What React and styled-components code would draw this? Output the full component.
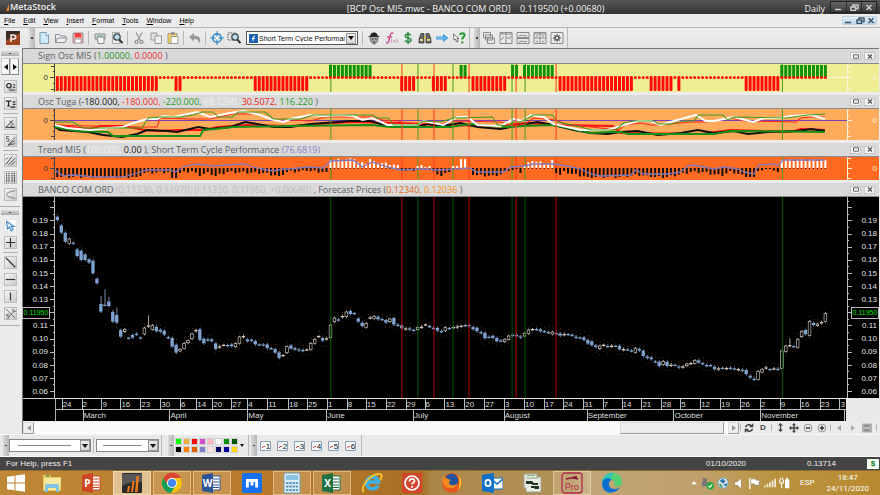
import React from 'react';
import styled, { createGlobalStyle } from 'styled-components';

const GlobalStyle = createGlobalStyle`
  * { box-sizing: border-box; }
  body { margin: 0; background: #e9e9e9; font-family: "Liberation Sans", Arial, sans-serif; font-size: 8px; }
  button, select { font: inherit; color: inherit; padding: 0; margin: 0; border: 0; background: none; border-radius: 0; }
  svg { display: block; }
  h1, p { margin: 0; font: inherit; }
`;

const Page = styled.div`
  min-height: 100vh;
  display: flex;
  flex-direction: column;
`;

const TitleBar = styled.header`
  height: 14px;
  display: flex;
  align-items: center;
  background: linear-gradient(#575757, #414141 60%, #303030);
  color: #f2f2f2;
  font: 9px/14px "Open Sans", "Noto Sans", sans-serif;
  padding: 0 3px 0 6px;
  white-space: pre;
`;
const Brand = styled.h1`
  display: flex;
  align-items: center;
  flex: 5 1 0;
  font-weight: 600;
`;
const DocTitle = styled.div`
  padding-top: 3px;
`;
const TitleRight = styled.div`
  flex: 4 1 0;
  display: flex;
  justify-content: flex-end;
  align-items: center;
  gap: 5px;
`;
const Period = styled.span`
  padding-top: 3px;
`;
const WinButtons = styled.div`
  display: flex;
  border: 1px solid ${(p) => (p.$dark ? '#222' : '#c3d3e0')};
  background: ${(p) => (p.$dark ? 'linear-gradient(#666, #3a3a3a)' : 'linear-gradient(#e6f0f8, #b9cfe0)')};
  color: ${(p) => (p.$dark ? '#ccc' : '#3d5a70')};
  button {
    width: ${(p) => (p.$dark ? 15 : 11)}px;
    height: ${(p) => (p.$dark ? 10 : 7)}px;
    display: flex;
    align-items: center;
    justify-content: center;
  }
  button + button { border-left: 1px solid ${(p) => (p.$dark ? '#2b2b2b' : '#d9e6ef')}; }
`;

const MenuBar = styled.nav`
  height: 14px;
  display: flex;
  align-items: center;
  justify-content: space-between;
  padding: 0 3px 0 4px;
  background: #ebebeb;
  border-bottom: 1px solid #b5b5b5;
`;
const Menus = styled.div`
  display: flex;
  gap: 8px;
  font-size: 7px;
  button::first-letter { text-decoration: underline; }
`;

const ToolBar = styled.div`
  height: 20px;
  display: flex;
  align-items: center;
  padding-left: 4px;
  background: linear-gradient(#eee, #e4e4e4);
`;
const Tool = styled.button`
  width: 17px;
  height: 17px;
  display: flex;
  align-items: center;
  justify-content: center;
`;
const Sep = styled.span`
  width: 1px;
  align-self: stretch;
  margin: ${(p) => (p.$full ? 0 : 3)}px ${(p) => (p.$tight ? 1 : 2)}px;
  background: #b8b8b8;
`;
const Grip = styled.span`
  width: 6px;
  align-self: stretch;
  margin-left: ${(p) => p.$left || 0}px;
  background: radial-gradient(circle at center, #444 0, #444 1px, transparent 1px), linear-gradient(90deg, #d9d9d9, #b5b5b5);
`;
const IndicatorBox = styled.div`
  display: flex;
  align-items: center;
  width: 112px;
  height: 14px;
  margin: 0 2px 0 4px;
  padding: 0 1px 0 2px;
  gap: 1px;
  border: 1px solid #555;
  background: #fff;
  svg { flex: none; }
`;
const IndicatorSelect = styled.select`
  flex: 1;
  min-width: 0;
  height: 11px;
  appearance: none;
  font-size: 7px;
  color: #111;
  overflow: hidden;
  outline: none;
`;
const ArrowBox = styled.span`
  width: 10px;
  height: 11px;
  flex: none;
  display: flex;
  align-items: center;
  justify-content: center;
  border: 1px solid #999;
  background: linear-gradient(#ececec, #d8d8d8);
`;

const Body = styled.main`
  flex: 1;
  display: flex;
  min-height: 0;
`;
const Rail = styled.aside`
  width: 22px;
  flex: none;
  display: flex;
  flex-direction: column;
  align-items: center;
  padding: 3px 2px 0 0;
  background: #ebebeb;
`;
const RailGrip = styled.div`
  width: 18px;
  height: 5px;
  margin-bottom: 2px;
  background: radial-gradient(circle at center, #444 0, #444 1px, transparent 1px), linear-gradient(#ddd, #aaa);
`;
const RailPager = styled.div`
  display: flex;
  margin-bottom: 3px;
  button {
    width: 9px;
    height: 17px;
    display: flex;
    align-items: center;
    justify-content: center;
    background: #f6f6f6;
    border: 1px solid #ccc;
    border-right-color: #888;
    border-bottom-color: #888;
  }
`;
const RailTool = styled.button`
  width: 13px;
  height: 13px;
  margin: 2px 0;
  display: flex;
  align-items: center;
  justify-content: center;
  background: ${(p) => (p.$on ? '#fafafa' : 'linear-gradient(135deg, #f6f6f6, #c9c9c9)')};
  border: 1px solid ${(p) => (p.$on ? '#e4e4e4' : '#bdbdbd')};
`;
const RailSep = styled.div`
  width: ${(p) => (p.$wide ? 20 : 15)}px;
  height: 1px;
  margin: ${(p) => (p.$wide ? 3 : 1)}px 0;
  background: #adadad;
`;

const Work = styled.section`
  flex: 1;
  min-width: 0;
  display: flex;
  flex-direction: column;
  border-left: 1px solid #777;
  margin-right: 1px;
`;
const Head = styled.div`
  height: 17px;
  flex: none;
  display: flex;
  align-items: center;
  justify-content: space-between;
  padding: 0 4px 0 15px;
  border-top: 3px solid #ececec;
  border-bottom: 1px solid #8a8a8a;
  background: #d9d9d9;
  &:first-child { height: 16px; border-top: 1px solid #777; }
`;
const Legend = styled.p`
  font: 9px/12px "Open Sans", "Noto Sans", sans-serif;
  color: #5c6266;
  white-space: pre;
`;
const Val = styled.span`
  color: ${(p) => p.$c};
`;
const HeadButtons = styled.div`
  display: flex;
  gap: 3px;
  button {
    width: 11px;
    height: 8px;
    display: flex;
    align-items: center;
    justify-content: center;
    background: #f4f4f4;
    border: 1px solid #c4c4c4;
  }
`;
const ChartRow = styled.div`
  display: flex;
  height: ${(p) => p.$h}px;
  flex: ${(p) => (p.$grow ? '1 0 auto' : 'none')};
  background: ${(p) => p.$bg};
`;
const AxisLabels = styled.div`
  width: 27px;
  flex: none;
  display: flex;
  flex-direction: column;
  justify-content: ${(p) => (p.$scale ? 'space-between' : 'center')};
  align-items: flex-end;
  padding: ${(p) => (p.$scale ? '19px' : '0')} 2px ${(p) => p.$low || 0}px 0;
  color: ${(p) => p.$c};
  line-height: 10px;
`;
const LastPrice = styled.span`
  width: 28px;
  height: 12px;
  margin: -1px -2px;
  border: 1px solid #b9b9b9;
  background: #000;
  color: #00e000;
  font-size: 7px;
  line-height: 10px;
  text-align: center;
`;
const Plot = styled.svg`
  flex: ${(p) => (p.$w ? 'none' : '1 1 0')};
  width: ${(p) => (p.$w ? p.$w + 'px' : 'auto')};
  min-width: 0;
  height: 100%;
`;

const DateAxis = styled.div`
  height: 23px;
  flex: none;
  display: flex;
  background: #e9e9e9;
`;
const DateGap = styled.div`
  width: 32px;
  background: #000;
  border-top: 1px solid #ccc;
`;
const DateRows = styled.div`
  flex: 1;
  min-width: 0;
  margin-right: 33px;
  background: #000;
  border-top: 1px solid #e4e4e4;
  border-left: 1px solid #aaa;
  color: #ddd;
`;
const DateRow = styled.div`
  display: flex;
  height: 11px;
  line-height: 11px;
  border-bottom: ${(p) => (p.$line ? '1px solid #bbb' : '0')};
  span {
    min-width: 0;
    overflow: hidden;
    border-left: 1px solid #bbb;
    white-space: nowrap;
  }
  span:first-child { border: 0; }
`;
const DateCell = styled.span`
  flex: ${(p) => p.$span} 1 0;
`;

const ScrollRow = styled.div`
  height: 13px;
  flex: none;
  display: flex;
  align-items: center;
  background: #ebebeb;
`;
const ScrollButton = styled.button`
  width: 11px;
  height: 12px;
  display: flex;
  align-items: center;
  justify-content: center;
  background: #eee;
  border: 1px solid #ddd;
  border-right-color: #999;
  border-bottom-color: #999;
`;
const Track = styled.div`
  flex: 1;
  height: 12px;
  display: flex;
  justify-content: flex-end;
  background: #fafafa;
`;
const Thumb = styled.div`
  width: 15%;
  margin-right: 4px;
  background: #ececec;
  border: 1px solid #ddd;
  border-right-color: #999;
  border-bottom-color: #999;
`;
const ZoomTool = styled.button`
  width: 14px;
  height: 12px;
  display: flex;
  align-items: center;
  justify-content: center;
  color: #444;
  font-weight: bold;
  &:disabled { color: #aaa; }
`;

const StyleBar = styled.div`
  height: 23px;
  flex: none;
  display: flex;
  align-items: center;
  background: #e9e9e9;
  border-top: 1px solid #f8f8f8;
  border-bottom: 1px solid #f8f8f8;
`;
const LinePicker = styled.div`
  display: flex;
  align-items: center;
  width: ${(p) => p.$w}px;
  height: 13px;
  background: #fff;
  border: 1px solid #888;
  select {
    flex: 1;
    min-width: 0;
    height: 11px;
    appearance: none;
    background: linear-gradient(#888, #888) center / 76% 1px no-repeat;
  }
`;
const Swatches = styled.div`
  display: grid;
  grid-template-columns: repeat(8, 7px);
  gap: 1px;
  margin-left: 1px;
`;
const Swatch = styled.button`
  height: 7px;
  border: 1px solid #d0d0d0;
  background: ${(p) => p.$c};
`;
const MoreColors = styled.button`
  width: 8px;
  height: 12px;
  display: flex;
  align-items: center;
  justify-content: center;
`;
const StatusBar = styled.footer`
  height: 13px;
  flex: none;
  display: flex;
  align-items: center;
  background: #444;
  color: #eee;
  padding: 0 1px 0 6px;
`;
const StatusText = styled.span`
  flex: 1;
`;
const StatusValue = styled.span`
  width: ${(p) => p.$w}px;
`;
const StatusFlag = styled.span`
  width: 12px;
  height: 10px;
  background: #f4fff4;
  color: #0b7a1b;
  font-weight: bold;
  line-height: 10px;
  text-align: center;
`;

const TaskBar = styled.div`
  height: 25px;
  flex: none;
  display: flex;
  align-items: center;
  border-top: 1px solid #8c6a30;
  background: linear-gradient(90deg, #bf8835 0%, #b87a2a 30%, #a96f25 48%, #ab8648 49%, #b3935b 65%, #bfa577 67%, #c0a06a 80%, #b9933f 88%, #b98a30 100%);
`;
const StartButton = styled.button`
  width: 32px;
  height: 24px;
  display: flex;
  align-items: center;
  justify-content: center;
`;
const Task = styled.button`
  width: 38px;
  height: 24px;
  margin: 0 1px;
  display: flex;
  align-items: center;
  justify-content: center;
  border: 1px solid ${(p) => (p.$open ? 'rgba(255, 240, 210, 0.45)' : 'transparent')};
  background: ${(p) => (p.$active ? 'rgba(255, 245, 225, 0.55)' : p.$open ? 'rgba(255, 240, 210, 0.2)' : 'transparent')};
`;
const Tray = styled.div`
  margin-left: auto;
  display: flex;
  align-items: center;
  gap: 3px;
  color: #fff;
  font: 8px/10px Roboto, "Liberation Sans", sans-serif;
`;
const Lang = styled.span`
  margin: 0 9px 0 6px;
`;
const Clock = styled.div`
  text-align: center;
  line-height: 11px;
  margin-right: 11px;
`;

/* ---- chart data ---- */

const STEP = 3.954;
const barX = (i) => 57.3 + i * STEP;
const BARS = Array.from({ length: 195 }, (_, i) => i);

const SIGNALS = [
  [330, 'g'], [401, 'r'], [417, 'g'], [433, 'r'], [452, 'g'], [468, 'r'],
  [511, 'g'], [515, 'r'], [524, 'g'], [555, 'r'], [781, 'g'],
];

const SELL = [[0, 25], [30, 31], [50, 63], [87, 90], [95, 98], [105, 113], [127, 145], [150, 155], [157, 157], [174, 182]];
const BUY = [[69, 79], [102, 103], [115, 116], [118, 125], [183, 194]];
const within = (ranges, i) => ranges.some(([a, b]) => i >= a && i <= b);

const OSC = [
  ['#ff1111', 2, '55,16 70,18 90,20 100,17 123,17 145,21 158,22 180,21 205,21 217,18 247,16 290,17 350,13 400,14 440,16 500,17 525,14 555,16 612,17 620,24 700,25 730,21 790,23 800,20 824,21'],
  ['#111', 2, '55,18 60,21 88,23 103,26 122,28 137,25 147,21 167,22 177,23 198,18 210,20 230,18 245,13 263,16 273,18 290,18 310,15 350,12 370,12 383,16 417,18 427,15 440,17 460,14 477,18 500,20 520,16 537,13 553,16 573,21 590,24 607,25 620,23 637,22 657,26 680,24 697,21 713,24 733,22 747,25 767,23 797,22 810,20 824,22'],
  ['#169016', 2, '55,18 77,22 108,23 113,27 200,27 203,21 215,20 233,18 290,17 372,16 390,18 450,18 470,15 493,17 507,18 523,17 553,16 563,18 590,24 610,23 620,23 627,25 713,25 730,22 824,23'],
  ['#ff2a1c', 1, '55,16 123,18 157,18 160,9 190,10 210,10 232,5 258,5 272,11 290,11 310,12 325,8 372,8 382,11 398,12 408,16 425,14 440,15 455,12 500,13 512,17 525,15 533,9 555,11 565,15 590,18 618,21 624,16 640,14 650,16 670,15 690,13 705,13 730,9 745,12 795,13 800,9 810,8 824,8'],
  ['#fff', 2, '55,16 67,19 90,21 110,19 123,18 133,14 147,10 157,10 163,7 173,8 197,3 210,8 230,4 243,2 260,6 270,10 283,13 290,10 310,6 323,7 340,6 353,7 362,11 372,9 387,16 417,16 423,12 433,14 443,16 457,8 467,8 477,16 500,17 513,10 522,12 530,6 543,8 553,15 580,21 607,21 623,16 637,12 650,12 660,16 673,12 695,6 705,12 713,12 733,8 752,13 763,9 780,9 790,7 810,6 824,10'],
  ['#3f9a1c', 1, '55,13 73,13 83,19 142,19 148,9 160,8 180,8 193,6 202,3 213,3 218,8 232,8 238,3 265,3 273,10 300,10 313,6 372,6 377,9 388,9 393,16 417,16 423,12 440,13 453,9 492,8 497,16 507,17 513,13 520,13 533,6 552,6 557,13 580,18 590,21 615,21 623,14 633,12 653,12 658,15 670,15 683,12 693,12 698,6 722,6 727,11 733,8 785,9 807,6 824,5'],
];

const CYCLE =
  '55,13 63,19 73,18 97,20 123,20 137,16 147,13 170,13 175,15 185,9 197,7 213,9 243,7 257,11 273,14 283,12 290,12 307,10 323,11 330,4 353,3 362,10 372,5 387,10 400,13 423,12 437,13 457,12 468,11 477,15 503,15 510,10 523,9 533,7 553,7 567,9 580,12 590,17 600,19 630,18 635,13 643,17 667,17 680,15 687,9 693,8 713,12 723,10 737,12 743,15 753,17 758,8 773,7 777,9 782,3 824,3';

// [bar index, bar height], linear between the knots
const TREND = [
  [0, -9], [20, -9], [22, -5], [28, -4], [29, -10], [30, -10], [31, -5], [34, -3], [36, -8], [38, -4], [40, -8], [43, -4],
  [52, -5], [56, -8], [58, -4], [63, -3], [68, -4], [69, 8], [75, 9], [76, 6], [78, 4], [79, 9], [80, 7], [82, 5], [86, 3],
  [87, -3], [90, -3], [91, 2], [94, 2], [95, -3], [97, -8], [99, -4], [100, 2], [101, 2], [102, 9], [103, 9], [104, -1],
  [105, -7], [111, -8], [114, -3], [116, -1], [117, -5], [118, 2], [120, 7], [124, 4], [125, 8], [126, -5], [127, -7],
  [128, -3], [130, -6], [134, -9], [144, -9], [146, -6], [150, -9], [154, -9], [160, -4], [163, -4], [168, -8], [170, -3],
  [174, -9], [176, -9], [177, -3], [180, -1], [182, -4], [183, 8], [194, 8],
];
const trendAt = (i) => {
  const k = TREND.findIndex(([at]) => at >= i);
  if (TREND[k][0] === i) return TREND[k][1];
  const [a, va] = TREND[k - 1];
  const [b, vb] = TREND[k];
  return va + ((vb - va) * (i - a)) / (b - a) + (i % 3) - 1;
};

// candle bodies as [open, close], three units to a pixel, measured from each block's base
const BLOCKS = [
  [9, [[50, 60], [76, 98], [98, 125], [130, 117], [128, 130], [148, 168], [152, 180], [163, 180], [178, 188], [182, 220], [236, 250], [312, 335], [314, 316], [304, 318], [336, 365], [345, 368], [390, 410], [395, 388], [413, 415], [405, 413], [401, 403], [412, 415], [402, 384], [380, 376], [388, 376], [380, 394], [389, 395], [392, 404], [411, 414], [414, 440], [434, 458], [453, 448], [445, 430], [428, 422], [416, 402], [394, 390], [388, 420], [416, 430], [418, 420], [418, 424], [430, 447], [442, 439], [436, 434], [435, 438], [433, 439], [440, 430], [430, 411], [412, 408], [418, 424], [419, 422], [423, 433], [433, 435], [433, 435], [433, 444], [444, 446], [447, 458], [457, 474], [467, 465], [458, 440], [436, 446]]],
  [279, [[174, 179], [178, 182], [180, 182], [180, 178], [178, 160], [160, 148], [140, 138], [144, 152], [147, 145], [143, 105], [95, 84], [88, 90], [82, 78], [80, 66], [63, 72], [69, 72], [85, 95], [98, 108], [112, 100], [84, 82], [85, 79], [80, 88], [87, 89], [90, 98], [95, 87], [84, 104], [104, 106], [106, 115], [118, 115], [115, 118], [119, 122], [119, 112], [112, 110], [105, 103], [108, 110], [113, 115], [114, 122], [123, 125], [122, 112], [114, 116], [113, 111], [112, 109], [110, 107], [105, 107], [105, 109], [111, 118], [113, 124], [126, 129], [128, 145], [140, 142], [137, 144], [144, 154], [151, 153], [155, 148], [148, 138], [134, 137], [135, 137], [139, 143], [138, 130], [130, 120], [119, 117], [117, 119], [118, 124], [123, 125], [126, 128], [132, 126], [129, 131], [130, 137], [134, 132], [132, 134], [134, 137], [140, 143], [142, 144], [142, 150], [150, 161]]],
  [249, [[184, 196], [196, 201], [206, 198], [197, 194], [198, 200], [199, 197], [197, 199], [197, 208], [209, 207], [208, 210], [211, 213], [217, 205], [207, 212], [212, 228], [229, 234], [232, 238], [244, 246], [245, 258], [254, 244], [245, 258], [256, 254], [254, 256], [259, 263], [261, 259], [257, 252], [251, 249], [250, 241], [241, 248], [249, 252], [255, 257], [255, 257], [260, 268], [268, 265], [263, 266], [266, 264], [263, 265], [265, 268], [269, 267], [269, 273], [270, 283], [287, 293], [296, 298], [298, 274], [276, 268], [264, 262], [267, 269], [267, 265], [266, 268], [265, 213], [214, 198], [199, 195], [198, 200], [202, 178], [170, 154], [150, 163], [166, 124], [129, 135], [137, 132], [130, 126], [124, 100]]],
];
const CANDLES = BLOCKS.flatMap(([base, rows]) => rows.map(([o, c]) => [o + base, c + base]));
const SPIKES = { 11: 24, 12: 46, 13: 14, 15: 22, 23: 30, 14: 6, 185: 20 };

const WEEKS = [
  ['', 6], ['24', 20], ['2', 20], ['9', 19], ['16', 20], ['23', 20], ['30', 20], ['6', 16], ['14', 16], ['20', 19], ['27', 16],
  ['4', 20], ['11', 21], ['18', 19], ['25', 20], ['1', 20], ['8', 19], ['15', 20], ['22', 20], ['29', 19], ['6', 20], ['13', 20],
  ['20', 20], ['27', 20], ['3', 20], ['10', 20], ['17', 19], ['24', 20], ['31', 20], ['7', 19], ['14', 20], ['21', 20], ['28', 19],
  ['5', 20], ['12', 20], ['19', 20], ['26', 20], ['2', 20], ['9', 20], ['16', 20], ['23', 20], ['3', 6],
];
const MONTHS = [
  ['', 27], ['March', 87], ['April', 78], ['May', 79], ['June', 87], ['July', 91], ['August', 83], ['September', 87], ['October', 87], ['November', 84], ['', 1],
];
const PRICES = ['0.19', '0.18', '0.17', '0.16', '0.15', '0.14', '0.13', '0.12', '0.11', '0.10', '0.09', '0.08', '0.07', '0.06'];
const COLORS = [
  ['Lime', '#0f0'], ['Sand', '#f0b040'], ['Red', '#f00'], ['Orchid', '#d050d0'], ['Pink', '#ffb6c1'], ['White', '#fff'], ['Green', '#0a8f0a'], ['Dark green', '#005500'],
  ['Black', '#000'], ['Orange', '#ff8000'], ['Burnt orange', '#e06000'], ['Lavender', '#8080c8'], ['Rose', '#ffe4e1'], ['Navy', '#000060'], ['Blue', '#000098'], ['Yellow', '#ffd800'],
];

/* ---- icons ---- */

const Glyph = ({ size = 14, w = 1, children }) => (
  <svg width={size} height={size} viewBox="0 0 14 14" fill="none" stroke="#777" strokeWidth={w} aria-hidden="true">
    {children}
  </svg>
);

const Lens = ({ x = 0 }) => (
  <>
    <circle cx={7 + x} cy="6" r="3.2" fill="#b8dcf4" stroke="#444" strokeWidth="1.3" />
    <path d={`M${9.4 + x} 8.6l3 3.6`} stroke="#333" strokeWidth="2" />
  </>
);

const FILE_TOOLS = [
  ['New', <><path d="M3 1.5h6l2.5 2.5v8.500H3z" fill="#cfeafa" stroke="#7d9db0" /><path d="M9 1.5v3h3" stroke="#7d9db0" fill="#fff" /></>],
  ['Open', <path d="M1.5 11.5v-8h4l1 1.5h5v2M1.5 11.5l2-4.5h9.500l-2 4.5z" fill="#eef0f2" stroke="#8a8f94" />],
  ['Save', <><path d="M2 2h10v10H2z" fill="#e9a0a0" stroke="#999" /><path d="M4 2h6v4H4z" fill="#f04040" stroke="none" /><path d="M4 8h6v4H4z" fill="#fff" stroke="#aaa" /></>],
];
const PRINT_TOOLS = [
  ['Print', <><path d="M2 3h10v5H2z" fill="#d8dcd8" stroke="#888" /><path d="M4 6h7v6.5H5z" fill="#f4f7f2" stroke="#889" /><path d="M4 5h6" stroke="#5a8" /></>],
  ['Preview', <><path d="M2.5 1.5h7v11h-7z" fill="#eee" stroke="#aaa" /><Lens /></>],
];
const EDIT_TOOLS = [
  ['Cut', <><path d="M4 1.5l4.5 8M10 1.5l-4.5 8" stroke="#999" strokeWidth="1.3" /><circle cx="4.5" cy="11" r="1.6" /><circle cx="9.5" cy="11" r="1.6" /></>],
  ['Copy', <><path d="M2 2h6v7H2z" fill="#e2e2e2" stroke="#999" /><path d="M6 5h6.5v7.5H6z" fill="#eee" stroke="#999" /></>],
  ['Paste', <><path d="M2 2.5h9v10H2z" fill="#f2d35c" stroke="#a98" /><path d="M5 1h3.500v3H5z" fill="#999" stroke="none" /><path d="M5 5.5h7v7H5z" fill="#fff" stroke="#999" /></>],
];
const AIM_TOOLS = [
  ['Crosshair', <><circle cx="7" cy="7" r="4.3" stroke="#2c86c4" strokeWidth="1.5" /><path d="M7 0v14M0 7h14" stroke="#2c86c4" /><circle cx="7" cy="7" r="1.5" fill="#fff" stroke="none" /></>],
  ['Zoom box', <><path d="M1 2h8v7H1z" strokeDasharray="1.5 1" stroke="#555" /><Lens x={1} /></>],
];
const RUN_TOOLS = [
  ['Expert Advisor', <><path d="M3 5.500h8l-.5 5L7 13.500 3.500 10z" fill="#a9a39c" stroke="#555" strokeWidth=".8" /><path d="M3.500 5c0-4.500 7-4.500 7 0l2 .5H1.500z" fill="#222" stroke="#222" strokeWidth=".5" /><path d="M5 8h1.500M8 8h1.500M6 11h2" stroke="#222" /></>],
  ['Indicator Builder', <><path d="M9.5 2.5c-2-1.5-3 0-3.500 2.5l-1 4.5c-.5 2-1.500 3-3 2M3 6h5" stroke="#d05090" strokeWidth="1.5" /><path d="M8 12c-1-1.500-1-2.500 0-4M12.500 8c1 1.500 1 2.500 0 4M9.300 9l2 2.200M11.300 9l-2 2.200" stroke="#d080a8" strokeWidth=".8" /></>],
  ['System Tester', <path d="M10 4.300C8.500 2.300 4.300 2.700 4.300 5c0 2.500 5.700 1.500 5.700 4 0 2.500-4.500 2.500-6 .5M7 1v12" stroke="#2c8c3a" strokeWidth="1.5" />],
  ['Explorer', <><path d="M3 2.500h3V12H1V8zM8 2.500h3L13 8v4H8z" fill="#666" stroke="#333" strokeWidth=".7" /><path d="M6 5h2v3H6z" fill="#d8b850" stroke="none" /><path d="M2 9h3M9 9h3" stroke="#f0d468" strokeWidth="2" /></>],
  ['Run', <><path d="M1 5.500h7V3l5.500 4L8 11V8.500H1z" fill="#3a9adc" stroke="none" /><path d="M1 7h10" stroke="#9ad0f4" /></>],
  ['Context help', <><path d="M1.500 3l.5 6 1.500-1 1 3 1.500-.5-1-3H7z" fill="#fff" stroke="#555" strokeWidth=".8" /><path d="M8 4c.5-2.500 4.500-2.500 4.500 0 0 2-2.200 2-2.200 4.500M10.300 10.500v2" stroke="#1f9a30" strokeWidth="2" /></>],
];
const WINDOW_TOOLS = [
  ['Cascade', <path d="M1.500 1.500h7v5h-7zM3.500 4h7v5h-7zM5.500 7h7v5.500h-7z" fill="#e8e8e8" stroke="#8a8a8a" />],
  ['Tile columns', <path d="M1 1.500h12v11H1zM7 1.500v11M2 9l3-3M8 6l2 2 2-3M1 3h12" stroke="#8a8a8a" />],
  ['Tile rows', <path d="M1 1.500h12v5H1zM1 7.500h12v5H1zM3 5l3-1 3 1 2-1M3 11l3-1 3 1 2-1" stroke="#8a8a8a" />],
  ['Tile grid', <path d="M1 1.500h12v11H1zM7 1.500v11M1 7h12M1 3h12M3 5.500l2-1M9 5.500l2-1M3 11l2-1M9 11l2-1" stroke="#8a8a8a" />],
  ['Options', <><path d="M1 1.500h12v11H1z" stroke="#8a8a8a" /><circle cx="7" cy="7" r="2" stroke="#555" strokeWidth="1.5" /><path d="M7 3v2M7 9v2M3 7h2M9 7h2M4.300 4.300l1.200 1.200M8.500 8.500l1.200 1.200M9.700 4.300L8.500 5.500M5.500 8.500L4.300 9.700" stroke="#555" /></>],
];

const RAIL_TOP = [
  ['Quick list', <><circle cx="5" cy="6" r="2.800" stroke="#222" strokeWidth="1.5" /><path d="M6 7l2 2.500M10 5h3M10 8h3M5 11.500h8" stroke="#555" strokeWidth="1.5" /></>],
  ['Templates', <path d="M1 4h7M4.500 4v6M3 10h3M10 5h3M10 8h3M7 11.500h6" stroke="#222" strokeWidth="1.5" />],
  'sep',
  ['Gann angle', <path d="M1 12h12M1 12l9-9M7 9a4 4 0 0 1 2 3M6 4l5 5" stroke="#333" strokeWidth="1.2" />],
  ['Speed lines', <path d="M5 2H2v3h3v3H1.500M4 13l9-10M4 13l9-6M4 13l9-2" stroke="#444" />],
  'sep',
  ['Parallel lines', <path d="M1 12L9 2M4 13l9-9M8 13l5-5M1 6l3-3" stroke="#444" strokeWidth="1.2" />],
  ['Time zones', <path d="M2 1v12M5 1v12M9 1v12M12 1v12" stroke="#444" strokeWidth="1.5" strokeDasharray="2 .8" />],
  ['Arc', <path d="M13 2C-2 5-2 9 13 12" stroke="#777" strokeWidth="1.2" />],
];
const RAIL_DRAW = [
  ['Trendline', <path d="M1 1l12 12" stroke="#333" strokeWidth="1.5" />],
  ['Horizontal line', <path d="M1 7h12" stroke="#333" strokeWidth="1.5" />],
  ['Vertical line', <path d="M7 2v10" stroke="#333" strokeWidth="1.5" />],
  ['Support and resistance', <path d="M1 1l12 12M5 11L12 4M10 1v3h4M5 8H2v2h3v3H2" stroke="#555" />],
];

const Down = () => <svg width="6" height="4" viewBox="0 0 6 4" aria-hidden="true"><path d="M0 0h6L3 4z" fill="#111" /></svg>;
const Tri = ({ left, c = '#999' }) => (
  <svg width="4" height="6" viewBox="0 0 4 6" aria-hidden="true"><path d={left ? 'M4 0v6L0 3z' : 'M0 0v6l4-3z'} fill={c} /></svg>
);

const WindowControls = ({ dark }) => (
  <WinButtons $dark={dark}>
    {[['Minimize', 'M1 5.500h6'], ['Restore', 'M3 3V1h5v3.500H6M1 3h4.500v3.500H1z'], ['Close', 'M1.500 1l5 5M6.500 1l-5 5']].map(([name, d]) => (
      <button key={name} type="button" aria-label={name}>
        <svg width="9" height="7" viewBox="0 0 9 7" fill="none" stroke="currentColor" strokeWidth="1.5"><path d={d} /></svg>
      </button>
    ))}
  </WinButtons>
);

const Tools = ({ items }) =>
  items.map(([name, art]) => (
    <Tool key={name} type="button" aria-label={name}><Glyph>{art}</Glyph></Tool>
  ));
const RailTools = ({ items }) =>
  items.map((item, n) =>
    item === 'sep' ? <RailSep key={n} /> : (
      <RailTool key={item[0]} type="button" aria-label={item[0]}><Glyph size={11}>{item[1]}</Glyph></RailTool>
    ));

const PanelHead = ({ children }) => (
  <Head>
    <Legend>{children}</Legend>
    <HeadButtons>
      <button type="button" aria-label="Maximize panel"><svg width="6" height="5" viewBox="0 0 6 5"><path d="M.5.8h5v3.400h-5z" fill="none" stroke="#666" /></svg></button>
      <button type="button" aria-label="Close panel"><svg width="6" height="5" viewBox="0 0 6 5"><path d="M1 .5l4 4M5 .5l-4 4" stroke="#555" strokeWidth="1.2" /></svg></button>
    </HeadButtons>
  </Head>
);

const Signals = ({ h }) =>
  SIGNALS.map(([x, kind]) => (
    <rect key={x} x={x} y="0" width="1" height={h} fill={kind === 'g' ? '#4c9a24' : '#ff3a1c'} />
  ));

const Ruler = ({ h, marks, c, right }) => (
  <Plot $w={5} viewBox={`0 0 5 ${h}`} preserveAspectRatio="none" shapeRendering="crispEdges" aria-hidden="true">
    <rect x={right ? 0 : 4} width="1" height={h} fill={c} />
    {marks.map(([y, len]) => <rect key={y} x={right ? 0 : 5 - len} y={y} width={len} height="1" fill={c} />)}
  </Plot>
);

const SmallPanel = ({ h, bg, low, marks, children }) => (
  <ChartRow $h={h} $bg={bg}>
    <AxisLabels $c="#333" $low={low}>0</AxisLabels>
    <Ruler h={h} marks={marks} c="#444" />
    <Plot viewBox={`55 0 791 ${h}`} preserveAspectRatio="none">{children}</Plot>
    <Ruler h={h} marks={marks} c="#fff4d8" right />
    <AxisLabels $c="#fff4d8" $low={low}>0</AxisLabels>
  </ChartRow>
);

const PRICE_MARKS = Array.from({ length: 30 }, (_, n) => [Math.round(194 - n * 6.56), n % 2 ? 2 : 5]).filter(([y]) => y > 0);
const PriceLabels = () => (
  <AxisLabels $c="#e4e4e4" $scale $low={1}>
    {PRICES.map((p) => (p === '0.12' ? <LastPrice key={p}>0.11950</LastPrice> : <span key={p}>{p}</span>))}
  </AxisLabels>
);

const Candle = ({ i, open, close }) => {
  const x = 7 + i * STEP * 3;
  const top = Math.min(open, close);
  const size = Math.abs(close - open);
  const up = close < open;
  const tail = size > 3 ? 4 + ((i * 7) % 7) : 3 + (i % 3);
  const line = up ? '#cfc8bd' : '#86a6cc';
  return (
    <g>
      <rect x={x - 1} y={top - (SPIKES[i] || tail)} width="3" height={SPIKES[i] || tail} fill={line} opacity=".85" />
      <rect x={x - 1} y={top + size} width="3" height={tail} fill={line} opacity=".85" />
      {up && size > 4
        ? <rect x={x - 4} y={top} width="8" height={size} fill="#000" stroke={line} strokeWidth="2" />
        : <rect x={x - 5} y={top} width="10" height={Math.max(size, 4)} fill={up ? '#d8cbb8' : '#7fa3cf'} />}
      <rect x={x} y={top - tail - 6 - ((i * 5) % 9)} width="3" height="2" fill="#7c3c08" />
      <rect x={x - 2} y={top + size + tail + 5 + ((i * 11) % 10)} width="3" height="2" fill="#6e3408" />
    </g>
  );
};

const tile = (c, letter) => (
  <>
    <path d="M9 4h10v14H9z" fill="#fff" stroke={c} />
    <path d="M12 7h6M12 10h6M12 13h6M12 15.500h6" stroke={c} />
    <path d="M1 3l11-2v20L1 19z" fill={c} />
    <text x="6.5" y="15" fontSize="10" fontWeight="bold" fontFamily="Open Sans, sans-serif" fill="#fff" textAnchor="middle">{letter}</text>
  </>
);
const TASKS = [
  ['File Explorer', '', <><path d="M2 3h7l1 2h10v14H2z" fill="#e7c65c" /><path d="M3 6h17l-1 12H3z" fill="#f8e9a0" /><path d="M4 20v-6q0-2 2-2h10q2 0 2 2v6h-3v-4H7v4z" fill="#7fc2e2" /><path d="M5 4h3" stroke="#4a9a50" strokeWidth="1.5" /></>],
  ['PowerPoint', '', tile('#d04525', 'P')],
  ['MetaStock', 'active', <><rect x="1" y="1" width="20" height="20" rx="1" fill="#2b2b2b" /><path d="M1 2h20v8Q10 9 1 14z" fill="#777" opacity=".6" /><path d="M6 20l1-6h2l-1 6zM10 20l1.500-11h2L12 20zM14 20l1.500-16h2.500L16.500 20z" fill="#f07a18" /></>],
  ['Chrome', 'open', <><circle cx="11" cy="11" r="10" fill="#f4c20d" /><path d="M2.300 6A10 10 0 0 1 20 6H11a5 5 0 0 0-4.500 7z" fill="#db4437" /><path d="M2.300 6A10 10 0 0 0 10 21l4.500-7.500a5 5 0 0 1-8-1z" fill="#0f9d58" /><circle cx="11" cy="11" r="5" fill="#fff" /><circle cx="11" cy="11" r="4" fill="#4285f4" /></>],
  ['Word', 'open', tile('#2a5699', 'W')],
  ['Maxthon', '', <><rect x="1" y="1" width="20" height="20" rx="2" fill="#1670f0" /><path d="M5 15.500V7h12v8.500h-2.800V10h-1.800v3.500H9.600V10H7.800v5.500z" fill="#fff" /></>],
  ['Calculator', 'open', <><rect x="3" y="1" width="16" height="20" rx="1" fill="#dcebf4" stroke="#6f9fbe" /><rect x="5" y="3" width="12" height="5" fill="#8cc4e4" /><path d="M5 11h12M5 14.500h12M5 18h12" stroke="#5d98c0" strokeWidth="2" strokeDasharray="2.5 .8" /></>],
  ['Excel', 'open', tile('#1f7244', 'X')],
  ['Internet Explorer', '', <><path d="M17 13.500a6 6 0 1 1 .5-3.500H6" fill="none" stroke="#3bb2ea" strokeWidth="3.5" /><path d="M3 20C-2 16 9 2 18 2c4 0 3 4 1 6" fill="none" stroke="#f4c430" strokeWidth="1.8" /></>],
  ['Help', '', <><rect x="1" y="1" width="20" height="20" fill="#d3452b" /><circle cx="11" cy="11" r="7" fill="none" stroke="#fff" strokeWidth="1.7" /><path d="M8.500 9.500c0-3.500 5-3.300 5-.5 0 1.800-2.500 1.800-2.500 3.500M11 14v1.800" fill="none" stroke="#fff" strokeWidth="1.8" /></>],
  ['Firefox', '', <><circle cx="11" cy="11" r="10" fill="#e8571b" /><circle cx="10.5" cy="8.5" r="6.8" fill="#24549c" /><path d="M2 4c2 2 3 1 5 3l3 1c-2 1-3 4 0 5 3 1 5-1 6-1-1 4-7 6-11 3C1 12 1 8 2 4z" fill="#f08a20" /><path d="M17 3c5 5 4 12 0 15 2-5 2-10 0-15z" fill="#ffcb2e" /></>],
  ['Outlook', '', <><path d="M9 6h13v11H9z" fill="#fff" stroke="#0a6cc0" /><path d="M10 7l6 5 6-5" fill="none" stroke="#0a6cc0" strokeWidth="1.5" /><path d="M1 3l12-2v20L1 19z" fill="#0f72c8" /><ellipse cx="7" cy="11" rx="2.6" ry="3.2" fill="none" stroke="#fff" strokeWidth="1.8" /></>],
  ['Trading desk', '', <><path d="M3 2h13v3h4v15H5v-4H3z" fill="#e9ede4" stroke="#9aa292" /><path d="M5 6h12M6 3.500h8" stroke="#8aa080" /><path d="M5 9h6l2 2h4v2h-5l-2-1H5zM10 14h8v3h-4l-1-1h-3z" fill="#1e3526" /></>],
  ['Pro', 'open', <><rect x="1" y="1" width="20" height="20" rx="3" fill="none" stroke="#b02a50" strokeWidth="1.3" /><path d="M5 7q6-2 12 0M12 5h4" stroke="#8a1838" strokeWidth="1.5" fill="none" /><text x="11" y="18" fontSize="9" fontFamily="Roboto, sans-serif" fill="#b02a50" textAnchor="middle">Pro</text></>],
  ['Edge', '', <><path d="M1 11A10 10 0 0 1 21 10c0 5-6 5-8 3 2-3 0-5-3-5-4 0-8 2-8 6z" fill="#36c5b0" /><path d="M12 1c6 0 9 4 9 9 0 5-6 5-8 3 2-3 0-5-3-5" fill="#5fd35a" opacity=".75" /><path d="M1 11c1-5 6-6 10-3-5 1-4 10 3 9 2 0 4-1 5-2-3 7-18 9-18-4z" fill="#0c6fd0" /></>],
];

export default function App() {
  return (
    <Page>
      <GlobalStyle />
      <TitleBar>
        <Brand>
          <svg width="4" height="8" viewBox="0 0 4 8" aria-hidden="true"><path d="M0 8L3 1v7z" fill="#f08020" /></svg>MetaStock
        </Brand>
        <DocTitle>{'[BCP Osc MI5.mwc - BANCO COM ORD]    0.119500 (+0.00680)'}</DocTitle>
        <TitleRight><Period>Daily</Period><WindowControls dark /></TitleRight>
      </TitleBar>
      <MenuBar>
        <Menus>
          {['File', 'Edit', 'View', 'Insert', 'Format', 'Tools', 'Window', 'Help'].map((m) => <button key={m} type="button">{m}</button>)}
        </Menus>
        <WindowControls />
      </MenuBar>
      <ToolBar>
        <Tool type="button" aria-label="Power Console">
          <Glyph><path d="M0 0h14v14H0z" fill="#3b2a24" stroke="none" /><path d="M0 9l14-7v12H0z" fill="#9a4420" stroke="none" /><path d="M5 11V4h2.500c3 0 3 4 0 4H5" stroke="#eee" strokeWidth="1.5" /></Glyph>
        </Tool>
        <Grip $left={8} />
        <Tools items={FILE_TOOLS} />
        <Sep />
        <Tools items={PRINT_TOOLS} />
        <Sep />
        <Tools items={EDIT_TOOLS} />
        <Sep />
        <Tool type="button" aria-label="Undo"><Glyph><path d="M1 6l5-4v2.500c6 0 8 4 5 8 0-3-1-4.500-5-4.500v2.500z" fill="#999" stroke="none" /></Glyph></Tool>
        <Sep />
        <Tools items={AIM_TOOLS} />
        <IndicatorBox>
          <svg width="9" height="9" viewBox="0 0 9 9" aria-hidden="true"><path d="M0 0h9v9H0z" fill="#1c5fae" /><path d="M6 2Q4 2 4 4v3M3 4.500h3" stroke="#fff" fill="none" /></svg>
          <IndicatorSelect aria-label="Indicator"><option>Short Term Cycle Performance</option></IndicatorSelect>
          <ArrowBox><Down /></ArrowBox>
        </IndicatorBox>
        <Sep />
        <Tools items={RUN_TOOLS} />
        <Sep $full />
        <Grip $left={2} />
        <Tools items={WINDOW_TOOLS} />
        <Sep $full />
      </ToolBar>

      <Body>
        <Rail>
          <RailGrip />
          <RailPager>
            <button type="button" aria-label="Previous tools"><Tri left c="#111" /></button>
            <button type="button" aria-label="Next tools"><Tri c="#111" /></button>
          </RailPager>
          <RailTools items={RAIL_TOP} />
          <RailSep $wide />
          <RailGrip />
          <RailTool $on type="button" aria-label="Pointer">
            <Glyph size={12}><path d="M2 1l1 10 2.500-2.500L8 13l2.500-1.500L8 7.500h3.500z" fill="#d8ecfa" stroke="#3f83c0" strokeWidth="1.3" /></Glyph>
          </RailTool>
          <RailTool type="button" aria-label="Crosshair"><Glyph size={11}><path d="M7 1v12M1 7h12" stroke="#333" strokeWidth="1.5" /></Glyph></RailTool>
          <RailSep />
          <RailTools items={RAIL_DRAW} />
          <RailSep $wide />
        </Rail>

        <Work>
          <PanelHead>
            Sign Osc MI5 (<Val $c="#1f9a28">1.00000, </Val><Val $c="#f03030">0.0000 </Val>)
          </PanelHead>
          <SmallPanel h={28} bg="#f0ee94" marks={[[2, 4], [7, 2], [13, 5], [19, 2], [25, 4]]}>
            <rect x="824" y="13" width="22" height="1" fill="#fdfbe0" />
            <Signals h={28} />
            {BARS.map((i) => (
              <g key={i}>
                {within(BUY, i) && <rect x={barX(i) - 1.5} y="1" width="3" height="13" fill="#0c930c" />}
                {within(SELL, i) ? <rect x={barX(i) - 1.5} y="12" width="3" height="15" rx="1" fill="#ff0a0a" /> : <circle cx={barX(i)} cy="13.5" r="1.5" fill="#ff0a0a" />}
              </g>
            ))}
          </SmallPanel>

          <PanelHead>
            Osc Tuga (<Val $c="#222">-180.000, </Val><Val $c="#f03030">-180.000, </Val><Val $c="#1f9a28">-220.000, </Val>
            <Val $c="#f2f2f2">69.1290, </Val><Val $c="#f02020">30.5072, </Val><Val $c="#1f9a28">116.220 </Val>)
          </PanelHead>
          <SmallPanel h={31} bg="#ffab5c" low={7} marks={[[1, 2], [6, 2], [11, 5], [17, 2], [22, 2], [27, 4]]}>
            <rect x="55" y="11" width="791" height="1" fill="#7a3fb0" />
            {OSC.map(([c, w, points]) => <polyline key={c} points={points} fill="none" stroke={c} strokeWidth={w} />)}
            <Signals h={31} />
          </SmallPanel>

          <PanelHead>
            Trend MI5 (<Val $c="#f2f2f2">100.000, </Val><Val $c="#222">0.00 </Val>), Short Term Cycle Performance <Val $c="#8c84c8">(76.6819)</Val>
          </PanelHead>
          <SmallPanel h={23} bg="#ff6a20" marks={[[1, 4], [6, 2], [11, 5], [16, 2], [21, 4]]}>
            <Signals h={23} />
            {BARS.map((i) => {
              const v = trendAt(i);
              return (
                <g key={i}>
                  <rect x={barX(i) - 1} y={v > 0 ? 11 - v : 11} width="2" height={Math.max(Math.abs(v), 1)} fill={v > 0 ? '#fff' : '#111'} />
                  {v > 0 && <rect x={barX(i) - 0.5} y="11" width="1" height="1" fill="#111" />}
                </g>
              );
            })}
            <polyline points={CYCLE} fill="none" stroke="#8478b8" strokeWidth="1.3" />
          </SmallPanel>

          <PanelHead>
            BANCO COM ORD <Val $c="#bcbcbc">(0.11330, 0.11970, 0.11330, 0.11950, +0.00680) </Val>, Forecast Prices (<Val $c="#e06c18">0.12340, </Val><Val $c="#f89018">0.12036 </Val>)
          </PanelHead>
          <ChartRow $h={201} $grow $bg="#000">
            <PriceLabels />
            <Ruler h={201} marks={PRICE_MARKS} c="#bbb" />
            <Plot viewBox="0 0 2373 603" preserveAspectRatio="none">
              {CANDLES.map(([open, close], i) => <Candle key={i} i={i} open={open} close={close} />)}
              {SIGNALS.map(([x, kind]) => (
                <rect key={x} x={(x - 55) * 3} width="3" height="603" fill={kind === 'g' ? '#006400' : '#c80000'} opacity=".9" />
              ))}
            </Plot>
            <Ruler h={201} marks={PRICE_MARKS} c="#bbb" right />
            <PriceLabels />
          </ChartRow>
          <DateAxis>
            <DateGap />
            <DateRows>
              <DateRow $line>{WEEKS.map(([t, n], k) => <DateCell key={k} $span={n}>{t}</DateCell>)}</DateRow>
              <DateRow>{MONTHS.map(([t, n], k) => <DateCell key={k} $span={n}>{t}</DateCell>)}</DateRow>
            </DateRows>
          </DateAxis>
          <ScrollRow>
            <ScrollButton type="button" aria-label="Scroll left"><Tri left /></ScrollButton>
            <Track><Thumb /></Track>
            <ScrollButton type="button" aria-label="Scroll right"><Tri /></ScrollButton>
            <Sep $tight />
            <ZoomTool type="button" aria-label="Refresh"><Glyph size={10} w={2}><path d="M2 6c1-4 7-5 9-1M12 8c-1 4-7 5-9 1M12 1v4H8M2 13V9h4" stroke="#444" /></Glyph></ZoomTool>
            <ZoomTool type="button">D</ZoomTool>
            <Sep $tight />
            <ZoomTool type="button" aria-label="Scale height"><Glyph size={9}><path d="M7 0l4 4H8v6h3l-4 4-4-4h3V4H3z" fill="#444" stroke="none" /></Glyph></ZoomTool>
            <ZoomTool type="button" aria-label="Pan"><Glyph size={10}><path d="M7 0l3 3H8v3h3V4l3 3-3 3V8H8v3h2l-3 3-3-3h2V8H3v2L0 7l3-3v2h3V3H4z" fill="#444" stroke="none" /></Glyph></ZoomTool>
            <ZoomTool type="button" aria-label="Zoom out"><Glyph size={10}><circle cx="7" cy="7" r="5.5" stroke="#777" /><path d="M4 7h6" stroke="#333" strokeWidth="2" /></Glyph></ZoomTool>
            <ZoomTool type="button" aria-label="Zoom in"><Glyph size={10}><circle cx="7" cy="7" r="5.5" stroke="#777" /><path d="M4 7h6M7 4v6" stroke="#333" strokeWidth="2" /></Glyph></ZoomTool>
            <Sep $tight />
            <ZoomTool type="button" disabled aria-label="Back"><Tri left c="#aaa" /></ZoomTool>
            <ZoomTool type="button" disabled aria-label="Forward"><Tri c="#aaa" /></ZoomTool>
            <ZoomTool type="button" aria-label="Data window"><Glyph size={10}><path d="M1 1.500h12v11H1z" fill="#bbb" stroke="#888" /><path d="M3 4h8M3 10h8" stroke="#777" strokeWidth="1.5" /></Glyph></ZoomTool>
            <Sep />
          </ScrollRow>
        </Work>
      </Body>

      <StyleBar>
        <Grip $left={3} />
        <LinePicker $w={82}><select aria-label="Line style"><option aria-label="Solid" /></select><ArrowBox><Down /></ArrowBox></LinePicker>
        <Sep />
        <LinePicker $w={63}><select aria-label="Line weight"><option aria-label="Thin" /></select><ArrowBox><Down /></ArrowBox></LinePicker>
        <Sep $full />
        <Grip $left={4} />
        <Swatches>{COLORS.map(([name, c]) => <Swatch key={name} type="button" $c={c} aria-label={name} />)}</Swatches>
        <MoreColors type="button" aria-label="More colors"><svg width="4" height="3" viewBox="0 0 4 3"><path d="M0 0h4L2 3z" fill="#111" /></svg></MoreColors>
        <Sep $full />
        <Grip />
        {[1, 2, 3, 4, 5, 6].map((n) => (
          <Tool key={n} type="button" aria-label={`Layout ${n}`}>
            <svg width="12" height="10" viewBox="0 0 12 10">
              <path d="M.5.5h10v9H.5z" fill="#f6f9fb" stroke="#8aa0b0" />
              <path d="M2 7l2-2 1 1" fill="none" stroke="#d04040" />
              <text x="8" y="8" fontSize="8" textAnchor="middle" fill="#111">{n}</text>
            </svg>
          </Tool>
        ))}
        <Sep $full />
      </StyleBar>
      <StatusBar>
        <StatusText>For Help, press F1</StatusText>
        <StatusValue $w={101}>01/10/2020</StatusValue>
        <StatusValue $w={60}>0.13714</StatusValue>
        <StatusFlag>$</StatusFlag>
      </StatusBar>
      <TaskBar>
        <StartButton type="button" aria-label="Start">
          <svg width="18" height="18" viewBox="0 0 18 18"><path d="M0 2.800l7.500-1v6.700H0zM8.500 1.600L18 .3v8.200H8.500zM0 9.500h7.500v6.700l-7.500-1zM8.500 9.500H18v8.200l-9.500-1.300z" fill="#fff" /></svg>
        </StartButton>
        {TASKS.map(([name, state, art]) => (
          <Task key={name} type="button" aria-label={name} $open={state !== ''} $active={state === 'active'}>
            <svg width="22" height="22" viewBox="0 0 22 22">{art}</svg>
          </Task>
        ))}
        <Tray>
          <Glyph size={8}><path d="M2 9l5-5 5 5z" fill="#fff" stroke="none" /></Glyph>
          <Glyph size={13}><path d="M2 1h4v4h1v5H1V5h1z" fill="#777" stroke="none" /><circle cx="10" cy="9.5" r="4" fill="#23a83a" stroke="none" /><path d="M8 9.500l1.500 1.700L12 8" stroke="#fff" strokeWidth="1.3" /></Glyph>
          <Glyph size={12}><circle cx="7" cy="7" r="6" fill="#dfeaf0" stroke="#6c9fb8" /><path d="M3 4l4-2 3 3-3 3zM7 9l5-2-1 4z" fill="#2f78a8" stroke="none" /><path d="M3 8l3 4" stroke="#3a9a50" strokeWidth="2" /></Glyph>
          <Glyph size={13}><path d="M3 5h3l4-4v12L6 9H3z" fill="#fff" stroke="#776a4c" strokeWidth=".5" /></Glyph>
          <Glyph size={13}><path d="M2 1v12" stroke="#fff" strokeWidth="1.5" /><path d="M3 2h5l1 1.500h4l-1.500 3L13 9H8L7 7.500H3z" fill="#fff" stroke="#776a4c" strokeWidth=".5" /></Glyph>
          <Glyph size={12}><path d="M0 12v-2h2v2zM3 12V8h2v4zM6 12V6h2v6zM9 12V4h2v8zM12 12V2h2v10z" fill="#f2ead8" stroke="none" /></Glyph>
          <Glyph size={12}><path d="M7 3h5v10H7zM8.500 1h2v2h-2z" fill="#fff" stroke="none" /><path d="M1 3v4h4V3M3 7v6M2 1v2M4 1v2" stroke="#fff" strokeWidth="1.3" /></Glyph>
          <Lang>ESP</Lang>
          <Clock><div>18:47</div><div>24/11/2020</div></Clock>
        </Tray>
      </TaskBar>
    </Page>
  );
}
